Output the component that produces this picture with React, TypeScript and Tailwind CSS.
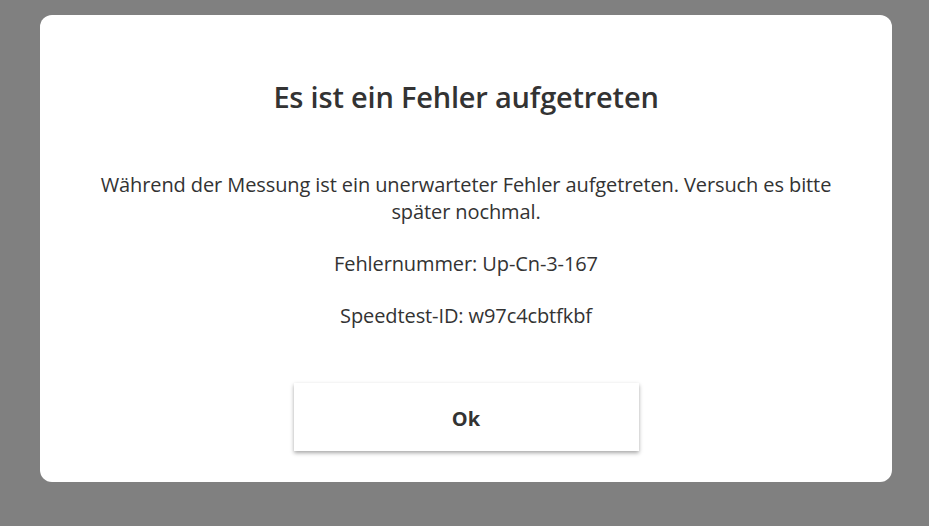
import React from "react";

export default function App() {
  return (
    <div className="w-[929px] h-[526px] bg-[#808080] pt-[15px] px-[40px] overflow-hidden" style={{ fontFamily: '"Open Sans", "Noto Sans", sans-serif' }}>
      <div className="w-[852px] h-[467px] bg-white rounded-[12px] flex flex-col items-center text-[#333333]">
        <h1 className="mt-[60px] text-[29px] leading-[44px] font-semibold tracking-[-0.2px]">Es ist ein Fehler aufgetreten</h1>
        <p className="mt-[52px] w-[760px] text-center text-[20px] leading-[27px] tracking-[-0.1px]">
          Während der Messung ist ein unerwarteter Fehler aufgetreten. Versuch es bitte später nochmal.
        </p>
        <p className="mt-[25px] text-[20px] leading-[27px] tracking-[-0.1px]">Fehlernummer: Up-Cn-3-167</p>
        <p className="mt-[25px] text-[20px] leading-[27px] tracking-[-0.1px]">Speedtest-ID: w97c4cbtfkbf</p>
        <button className="mt-[54px] w-[345px] h-[68px] bg-white text-[20px] font-bold text-[#333333] pt-[3px] shadow-[0_2px_4px_rgba(0,0,0,0.35)]">
          Ok
        </button>
      </div>
    </div>
  );
}
